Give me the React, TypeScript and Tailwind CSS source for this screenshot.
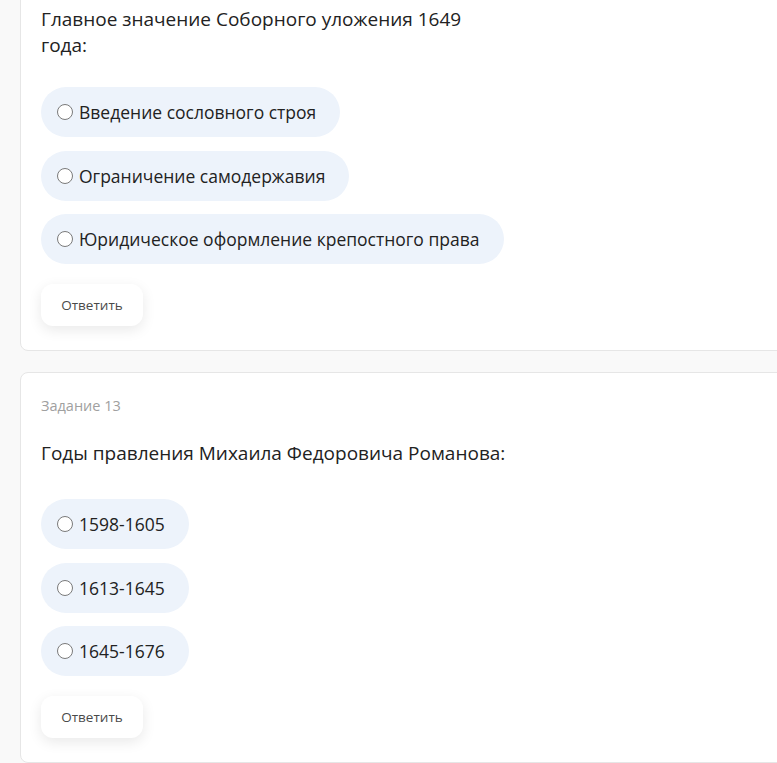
import React from "react";

type Task = {
  label?: string;
  question: React.ReactNode;
  options: string[];
};

const tasks: Task[] = [
  {
    question: (
      <>
        Главное значение Соборного уложения 1649
        <br />
        года:
      </>
    ),
    options: [
      "Введение сословного строя",
      "Ограничение самодержавия",
      "Юридическое оформление крепостного права",
    ],
  },
  {
    label: "Задание 13",
    question: "Годы правления Михаила Федоровича Романова:",
    options: ["1598-1605", "1613-1645", "1645-1676"],
  },
];

const Option: React.FC<{ text: string }> = ({ text }) => (
  <label className="flex h-[50px] w-fit items-center gap-[6px] rounded-[25px] bg-[#edf3fb] pl-4 pr-6 text-[17.5px] text-[#222222] cursor-pointer">
    <span className="h-[16px] w-[16px] shrink-0 rounded-full border border-[#7a7a7a] bg-white"></span>
    <span className="leading-[22px]">{text}</span>
  </label>
);

const TaskCard: React.FC<{ task: Task; first?: boolean }> = ({ task, first }) => (
  <div
    className={
      "w-[calc(100%+20px)] rounded-lg border border-[#e6e6e6] bg-white px-5 pb-[24px] " +
      (first ? "-mt-4 pt-[21px]" : "mt-[21px] pt-[23px]")
    }
  >
    {task.label && (
      <div className="mb-[24px] text-[14.5px] leading-5 text-[#a0a0a0]">{task.label}</div>
    )}
    <div className="text-[19px] leading-[26px] text-[#222222]">{task.question}</div>
    <div className={(first ? "mt-[29px]" : "mt-[33px]") + " flex flex-col gap-[13.5px]"}>
      {task.options.map((o) => (
        <Option key={o} text={o} />
      ))}
    </div>
    <button className="mt-[20px] h-[42px] w-[102px] rounded-xl bg-white text-[13.5px] font-medium text-[#4a4a4a] shadow-[0_4px_14px_rgba(0,0,0,0.09)]">
      Ответить
    </button>
  </div>
);

export default function App() {
  return (
    <div
      className="h-[763px] w-full overflow-hidden bg-[#f9f9f9] pl-5"
      style={{ fontFamily: '"Open Sans", "Noto Sans", sans-serif' }}
    >
      {tasks.map((t, i) => (
        <TaskCard key={i} task={t} first={i === 0} />
      ))}
    </div>
  );
}
